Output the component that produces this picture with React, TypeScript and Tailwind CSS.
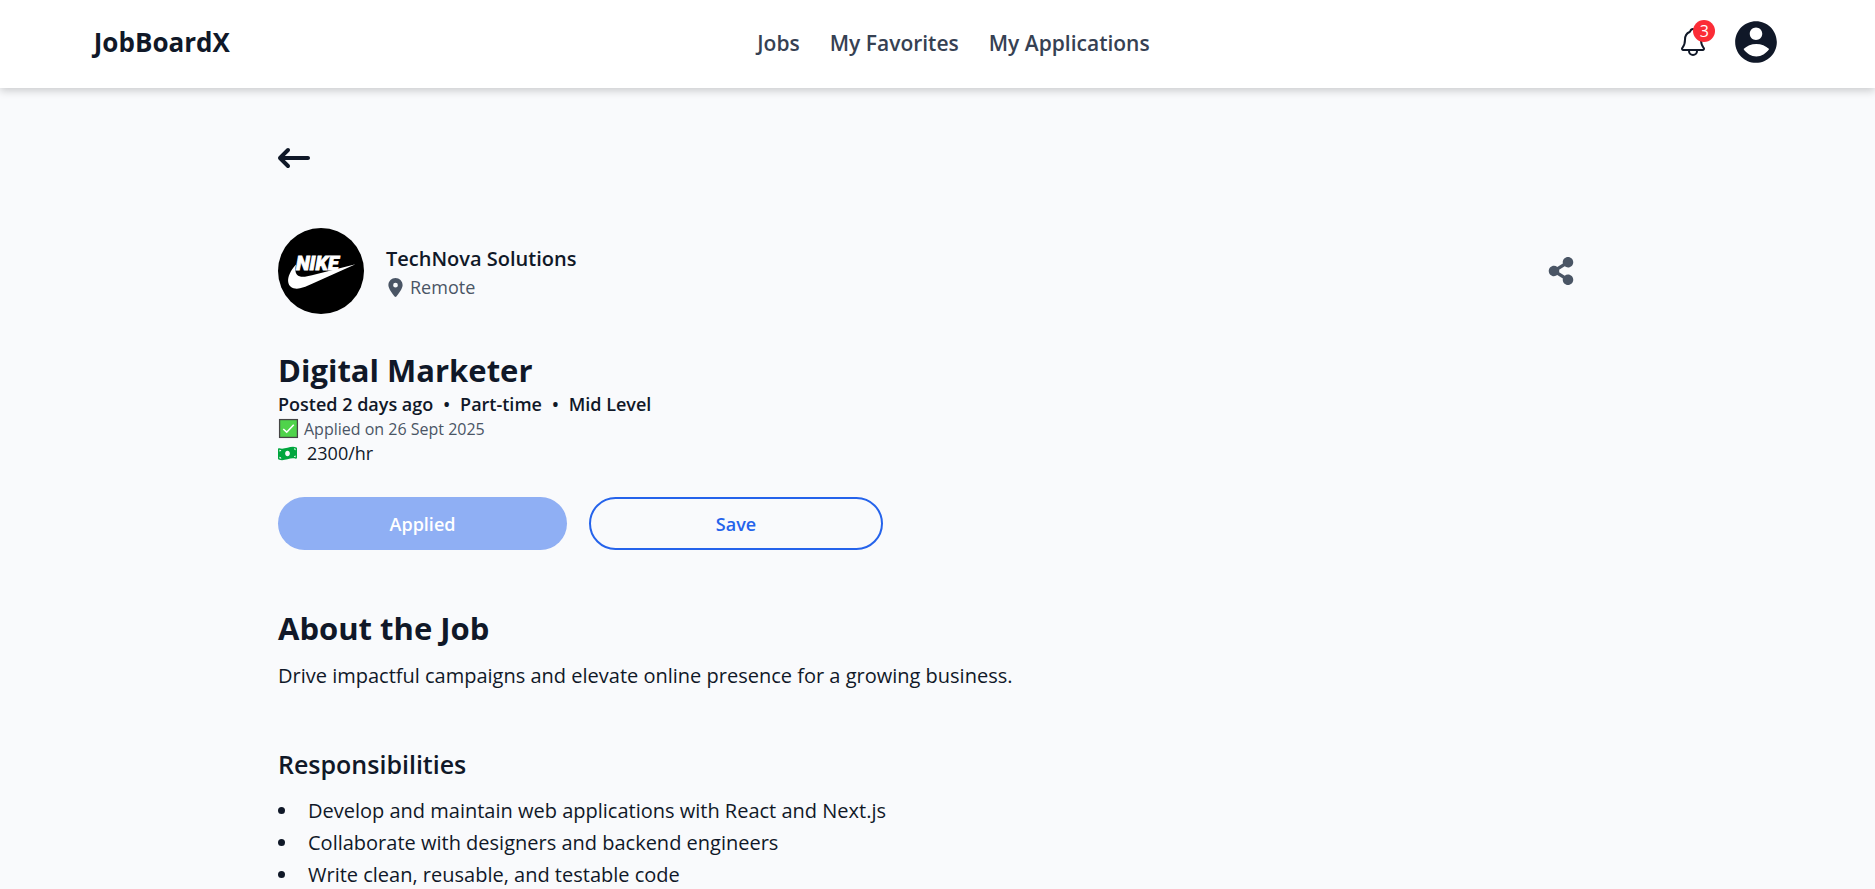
import { FaMoneyBillWave, FaShareAlt } from "react-icons/fa";
import { FaArrowLeftLong, FaLocationDot } from "react-icons/fa6";
import { IoNotificationsOutline } from "react-icons/io5";
import { RiAccountCircleFill } from "react-icons/ri";

const navLinks = ["Jobs", "My Favorites", "My Applications"];

const responsibilities = [
  "Develop and maintain web applications with React and Next.js",
  "Collaborate with designers and backend engineers",
  "Write clean, reusable, and testable code",
];

function CompanyLogo() {
  return (
    <svg viewBox="0 0 86 86" className="size-[86px] shrink-0" role="img" aria-label="Company logo">
      <circle cx="43" cy="43" r="43" fill="#000" />
      <text
        x="18"
        y="42"
        fill="#fff"
        stroke="#fff"
        strokeWidth="0.8"
        fontFamily="Roboto, 'Liberation Sans', sans-serif"
        fontStyle="italic"
        fontWeight="900"
        fontSize="20"
      >
        NIKE
      </text>
      <path
        d="M18 36.500C12.500 42.500 9.500 49 10.200 54C11 59.500 16 61.500 22 60.300C25.500 59.500 29 58 33 56.200L77.500 36.200L34 47.300C28 48.800 22 50 19 46.800C17.200 44.700 17 41.500 18 36.500Z"
        fill="#fff"
      />
    </svg>
  );
}

function CheckMark() {
  return (
    <svg viewBox="0 0 20 20" className="size-[21px]" aria-hidden="true">
      <rect x="1.500" y="1.500" width="17" height="17" fill="#4fd34b" stroke="#454545" strokeWidth="1.200" />
      <path d="M5 10.500L8.300 13.500L15 6.500" fill="none" stroke="#fff" strokeWidth="1.500" />
    </svg>
  );
}

function Header() {
  return (
    <header className="flex h-[88px] items-center justify-between bg-white px-[5%] pb-1 shadow-[0_3px_8px_rgba(0,0,0,0.18)]">
      <a href="#" className="text-[26px] leading-8 font-bold">
        JobBoardX
      </a>
      <nav className="flex gap-[30px] pt-0.5 text-[21px] leading-8 font-semibold text-[#364153]">
        {navLinks.map((label) => (
          <a key={label} href="#">
            {label}
          </a>
        ))}
      </nav>
      <div className="flex items-center gap-[22px]">
        <button type="button" aria-label="Notifications" className="relative">
          <IoNotificationsOutline className="size-8" />
          <span className="absolute -top-1.5 -right-1.5 flex size-[22px] items-center justify-center rounded-full bg-[#fb2c36] text-[16px] leading-none text-white">
            3
          </span>
        </button>
        <button type="button" aria-label="Account">
          <RiAccountCircleFill className="size-[50px]" />
        </button>
      </div>
    </header>
  );
}

export default function App() {
  return (
    <div className="min-h-screen bg-[#f9fafc] font-['Open_Sans','Noto_Sans',sans-serif] text-[#101828]">
      <Header />
      <main className="mx-auto max-w-[1319px] pt-[54px]">
        <button type="button" aria-label="Back" className="block">
          <FaArrowLeftLong className="size-8" />
        </button>

        <section className="mt-[54px] flex items-center gap-[22px]">
          <CompanyLogo />
          <div className="grow pt-1">
            <p className="text-[20px] leading-7 font-semibold">TechNova Solutions</p>
            <p className="flex items-center gap-[5px] text-[18px] leading-7 text-[#4a5565]">
              <FaLocationDot className="size-[19px]" />
              Remote
            </p>
          </div>
          <button type="button" aria-label="Share" className="mr-[22px] text-[#4a5565]">
            <FaShareAlt className="size-7" />
          </button>
        </section>

        <section className="mt-9">
          <h1 className="text-[31px] leading-10 font-bold">Digital Marketer</h1>
          <p className="flex gap-[10px] text-[18px] leading-7 font-semibold">
            <span>Posted 2 days ago</span>
            <span>•</span>
            <span>Part-time</span>
            <span>•</span>
            <span>Mid Level</span>
          </p>
          <p className="flex items-center gap-[5px] text-[16px] leading-5 text-[#4a5565]">
            <CheckMark />
            Applied on 26 Sept 2025
          </p>
          <p className="flex items-center gap-[10px] text-[18px] leading-7">
            <FaMoneyBillWave className="size-[19px] text-[#00a63e]" />
            2300/hr
          </p>
        </section>

        <div className="mt-[30px] flex gap-[22px] text-[18px] leading-7 font-semibold">
          <button type="button" disabled className="h-[53px] w-[289px] rounded-full bg-[#2563eb]/50 text-white">
            Applied
          </button>
          <button type="button" className="h-[53px] w-[294px] rounded-full border-2 border-[#2563eb] text-[#2563eb]">
            Save
          </button>
        </div>

        <section className="mt-[58px]">
          <h2 className="text-[31px] leading-10 font-bold">About the Job</h2>
          <p className="mt-3 text-[20px] leading-8">
            Drive impactful campaigns and elevate online presence for a growing business.
          </p>
        </section>

        <section className="mt-14">
          <h3 className="text-[25px] leading-8 font-semibold">Responsibilities</h3>
          <ul className="mt-[15px] list-inside list-disc text-[20px] leading-8">
            {responsibilities.map((item) => (
              <li key={item}>
                <span className="pl-0.5">{item}</span>
              </li>
            ))}
          </ul>
        </section>
      </main>
    </div>
  );
}
